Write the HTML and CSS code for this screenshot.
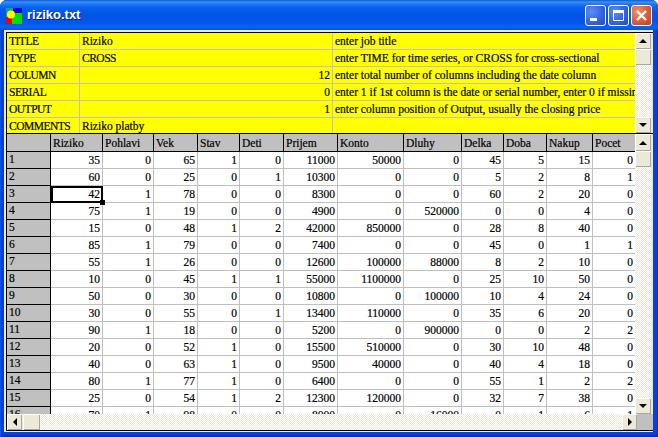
FILE: index.html
```html
<!DOCTYPE html>
<html lang="cs">
<head>
<meta charset="utf-8">
<title>riziko.txt</title>
<link rel="stylesheet" href="styles.css">
</head>
<body>
<div class="window">
  <div class="titlebar">
    <svg class="appicon" width="16" height="16" viewBox="0 0 16 16">
      <rect width="16" height="16" fill="#00a8a0"/>
      <rect x="7" width="9" height="8" fill="#0000e8"/>
      <rect x="4" y="5" width="12" height="11" fill="#00e000"/>
      <rect y="9" width="6" height="7" fill="#f00000"/>
      <circle cx="5" cy="6.5" r="4" fill="#ffff00"/>
    </svg>
    <span class="title">riziko.txt</span>
    <div class="capbuttons">
      <div class="capbtn">
        <svg width="19" height="19" viewBox="0 0 19 19"><rect x="4" y="12" width="7" height="3" fill="#fff"/></svg>
      </div>
      <div class="capbtn">
        <svg width="19" height="19" viewBox="0 0 19 19"><path d="M4.5 6.5h10v8h-10z" fill="none" stroke="#fff"/><rect x="4" y="4" width="11" height="3" fill="#fff"/></svg>
      </div>
      <div class="capbtn close">
        <svg width="19" height="19" viewBox="0 0 19 19"><path d="M5 5l9 9M14 5l-9 9" fill="none" stroke="#fff" stroke-width="2.4"/></svg>
      </div>
    </div>
  </div>
  <div class="client">
    <div class="pane top">
      <div class="sheet">
        <table class="params">
          <colgroup><col class="p1"><col class="p2"><col class="p3"></colgroup>
          <tr><td class="caps">TITLE</td><td>Riziko</td><td>enter job title</td></tr>
          <tr><td class="caps">TYPE</td><td class="caps">CROSS</td><td>enter TIME for time series, or CROSS for cross-sectional</td></tr>
          <tr><td class="caps">COLUMN</td><td class="n">12</td><td>enter total number of columns including the date column</td></tr>
          <tr><td class="caps">SERIAL</td><td class="n">0</td><td>enter 1 if 1st column is the date or serial number, enter 0 if missing</td></tr>
          <tr><td class="caps">OUTPUT</td><td class="n">1</td><td>enter column position of Output, usually the closing price</td></tr>
          <tr><td class="caps">COMMENTS</td><td>Riziko platby</td><td></td></tr>
        </table>
      </div>
      <div class="vscroll">
        <div class="sbtn"><i class="arrow up"></i></div>
        <div class="sbtn thumb"></div>
        <div class="track"></div>
        <div class="sbtn"><i class="arrow down"></i></div>
      </div>
    </div>
    <div class="pane bottom">
      <div class="sheet">
        <table class="data">
          <colgroup><col class="c0"><col class="c1"><col class="c2"><col class="c3"><col class="c4"><col class="c5"><col class="c6"><col class="c7"><col class="c8"><col class="c9"><col class="c10"><col class="c11"></colgroup>
          <thead>
          <tr><th></th><th>Riziko</th><th>Pohlavi</th><th>Vek</th><th>Stav</th><th>Deti</th><th>Prijem</th><th>Konto</th><th>Dluhy</th><th>Delka</th><th>Doba</th><th>Nakup</th><th>Pocet</th></tr>
          </thead>
          <tbody>
          <tr><th>1</th><td>35</td><td>0</td><td>65</td><td>1</td><td>0</td><td>11000</td><td>50000</td><td>0</td><td>45</td><td>5</td><td>15</td><td>0</td></tr>
          <tr><th>2</th><td>60</td><td>0</td><td>25</td><td>0</td><td>1</td><td>10300</td><td>0</td><td>0</td><td>5</td><td>2</td><td>8</td><td>1</td></tr>
          <tr><th>3</th><td class="selected">42</td><td>1</td><td>78</td><td>0</td><td>0</td><td>8300</td><td>0</td><td>0</td><td>60</td><td>2</td><td>20</td><td>0</td></tr>
          <tr><th>4</th><td>75</td><td>1</td><td>19</td><td>0</td><td>0</td><td>4900</td><td>0</td><td>520000</td><td>0</td><td>0</td><td>4</td><td>0</td></tr>
          <tr><th>5</th><td>15</td><td>0</td><td>48</td><td>1</td><td>2</td><td>42000</td><td>850000</td><td>0</td><td>28</td><td>8</td><td>40</td><td>0</td></tr>
          <tr><th>6</th><td>85</td><td>1</td><td>79</td><td>0</td><td>0</td><td>7400</td><td>0</td><td>0</td><td>45</td><td>0</td><td>1</td><td>1</td></tr>
          <tr><th>7</th><td>55</td><td>1</td><td>26</td><td>0</td><td>0</td><td>12600</td><td>100000</td><td>88000</td><td>8</td><td>2</td><td>10</td><td>0</td></tr>
          <tr><th>8</th><td>10</td><td>0</td><td>45</td><td>1</td><td>1</td><td>55000</td><td>1100000</td><td>0</td><td>25</td><td>10</td><td>50</td><td>0</td></tr>
          <tr><th>9</th><td>50</td><td>0</td><td>30</td><td>0</td><td>0</td><td>10800</td><td>0</td><td>100000</td><td>10</td><td>4</td><td>24</td><td>0</td></tr>
          <tr><th>10</th><td>30</td><td>0</td><td>55</td><td>0</td><td>1</td><td>13400</td><td>110000</td><td>0</td><td>35</td><td>6</td><td>20</td><td>0</td></tr>
          <tr><th>11</th><td>90</td><td>1</td><td>18</td><td>0</td><td>0</td><td>5200</td><td>0</td><td>900000</td><td>0</td><td>0</td><td>2</td><td>2</td></tr>
          <tr><th>12</th><td>20</td><td>0</td><td>52</td><td>1</td><td>0</td><td>15500</td><td>510000</td><td>0</td><td>30</td><td>10</td><td>48</td><td>0</td></tr>
          <tr><th>13</th><td>40</td><td>0</td><td>63</td><td>1</td><td>0</td><td>9500</td><td>40000</td><td>0</td><td>40</td><td>4</td><td>18</td><td>0</td></tr>
          <tr><th>14</th><td>80</td><td>1</td><td>77</td><td>1</td><td>0</td><td>6400</td><td>0</td><td>0</td><td>55</td><td>1</td><td>2</td><td>2</td></tr>
          <tr><th>15</th><td>25</td><td>0</td><td>54</td><td>1</td><td>2</td><td>12300</td><td>120000</td><td>0</td><td>32</td><td>7</td><td>38</td><td>0</td></tr>
          <tr><th>16</th><td>70</td><td>1</td><td>98</td><td>0</td><td>0</td><td>8000</td><td>0</td><td>16000</td><td>0</td><td>1</td><td>6</td><td>1</td></tr>
          </tbody>
        </table>
      </div>
      <div class="vscroll">
        <div class="sbtn first"><i class="arrow up"></i></div>
        <div class="sbtn thumb"></div>
        <div class="track"></div>
        <div class="sbtn"><i class="arrow down"></i></div>
      </div>
    </div>
    <div class="hscroll">
      <div class="sbtn left"><i class="arrow lt"></i></div>
      <div class="sbtn hthumb"></div>
      <div class="track"></div>
      <div class="sbtn right"><i class="arrow rt"></i></div>
      <div class="corner"></div>
    </div>
  </div>
</div>
</body>
</html>
```
FILE: styles.css
```css
* { box-sizing: border-box; }
html, body { margin: 0; padding: 0; background: #fff; }
body { width: 658px; height: 437px; overflow: hidden; }

.window {
  width: 658px;
  height: 437px;
  display: flex;
  flex-direction: column;
  border-radius: 7px 7px 0 0;
  background: #0a3fd8;
  overflow: hidden;
  padding: 0 5px 5px 4px;
  box-shadow: inset 1px 0 #0a55e0, inset -1px 0 #0a2fb8, inset 0 -2px #0730c0;
}

.titlebar {
  height: 30px;
  margin: 0 -5px 0 -4px;
  padding: 0 6px 0 6px;
  display: flex;
  align-items: center;
  flex: none;
  background: linear-gradient(#0a5ad8 0, #3c8ff5 2px, #1f78f4 4px, #0860ec 8px, #0255e6 15px, #0256e8 23px, #0a64f2 27px, #0650e0 30px);
}
.appicon { flex: none; margin-top: 1px; }
.title {
  margin-left: 5px;
  color: #fff;
  font: bold 13px/16px "Liberation Sans", Arial, sans-serif;
  text-shadow: 1px 1px 0 #0f1f80;
}
.capbuttons { margin-left: auto; display: flex; gap: 2px; }
.capbtn {
  width: 21px;
  height: 21px;
  border: 1px solid #fff;
  border-radius: 3px;
  background: radial-gradient(circle at 30% 30%, #5f8df0 0, #3b6ce8 45%, #1d49c8 100%);
}
.capbtn svg { display: block; }
.capbtn.close { background: radial-gradient(circle at 30% 30%, #ee9070 0, #e0603a 50%, #bd3a1c 100%); }

.client {
  flex: 1;
  min-height: 0;
  display: flex;
  flex-direction: column;
  background: #ece9d8;
  padding: 2px 0 0 2px;
  border-bottom: 1px solid #ece9d8;
}

.pane { display: flex; flex: none; border-left: 1px solid #000; }
.pane.top { height: 102px; border-top: 1px solid #000; border-bottom: 1px solid #000; }
.pane.top .sheet, .pane.top .vscroll { height: 100px; }
.pane.bottom { height: 280px; }
.sheet { width: 628px; height: 100%; overflow: hidden; flex: none; position: relative; }

table {
  border-collapse: separate;
  border-spacing: 0;
  table-layout: fixed;
  width: 628px;
  font: 11.5px/15px "Liberation Serif", "Times New Roman", serif;
  color: #000;
  -webkit-text-stroke: 0.2px #000;
}
td, th { padding: 0; overflow: hidden; white-space: nowrap; font-weight: normal; }

.params { width: 628px; background: #ff0; }
.p1 { width: 73px; }
.p2 { width: 253px; }
.p3 { width: 302px; }
.params td {
  height: 17px;
  border-right: 1px solid #c0c0c0;
  border-bottom: 1px solid #c0c0c0;
  padding: 1px 2px 0;
}
.params td:last-child { border-right: 0; }
.params td.n { text-align: right; }
.params td.caps { letter-spacing: -0.5px; }

.c0 { width: 44px; }
.c1 { width: 52px; }
.c2 { width: 51px; }
.c3 { width: 44px; }
.c4 { width: 42px; }
.c5 { width: 44px; }
.c6 { width: 54px; }
.c7 { width: 66px; }
.c8 { width: 58px; }
.c9 { width: 42px; }
.c10 { width: 43px; }
.c11 { width: 46px; }

.data thead th {
  height: 18px;
  background: #c0c0c0;
  border-right: 1px solid #000;
  border-bottom: 1px solid #000;
  text-align: left;
  padding: 1px 2px 0;
}
.data thead th:last-child { border-right: 0; }
.data tbody th {
  height: 17px;
  background: #c0c0c0;
  border-right: 1px solid #000;
  border-bottom: 1px solid #000;
  text-align: left;
  padding: 0 2px 1px;
}
.data td {
  height: 17px;
  background: #fff;
  border-right: 1px solid #c0c0c0;
  border-bottom: 1px solid #c0c0c0;
  text-align: right;
  padding: 1px 2px 0;
}
.data td:last-child { border-right: 0; }
.data td.selected {
  position: relative;
  overflow: visible;
  outline: 2px solid #000;
  outline-offset: -2px;
}
.data td.selected::after {
  content: "";
  position: absolute;
  right: -3px;
  bottom: -3px;
  width: 5px;
  height: 5px;
  background: #000;
}

.vscroll { width: 16px; display: flex; flex-direction: column; flex: none; }
.hscroll { height: 16px; display: flex; flex: none; border-left: 1px solid #000; box-shadow: 0 1px #000; }
.hscroll .track { flex: 1; }
.vscroll .track { flex: 1; }
.track { background: repeating-conic-gradient(#ece9d8 0 25%, #fff 0 50%) 0 0 / 2px 2px; }
.sbtn {
  flex: none;
  width: 16px;
  height: 16px;
  background: #ece9d8;
  box-shadow: inset 1px 1px #fff, inset -1px -1px #aca899;
  display: flex;
  align-items: center;
  justify-content: center;
}
.sbtn.first { height: 17px; }
.sbtn.left { width: 15px; }
.sbtn.hthumb { width: 17px; margin-left: 1px; }
.sbtn.right { width: 15px; }
.corner { width: 16px; background: #c0c0c0; }

.arrow { display: block; width: 0; height: 0; border: 4px solid transparent; }
.arrow.up { border-top: 0; border-bottom-color: #000; }
.arrow.down { border-bottom: 0; border-top-color: #000; }
.arrow.lt { border-left: 0; border-right-color: #000; }
.arrow.rt { border-right: 0; border-left-color: #000; }
```
